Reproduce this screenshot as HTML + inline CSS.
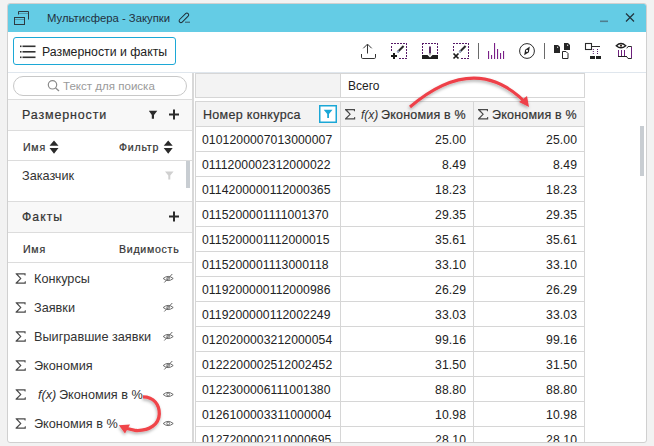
<!DOCTYPE html>
<html><head><meta charset="utf-8">
<style>
*{box-sizing:border-box;margin:0;padding:0}
html,body{width:654px;height:446px;overflow:hidden;background:#f2f2f2;font-family:"Liberation Sans",sans-serif;color:#333}
.a{position:absolute}
.t{position:absolute;white-space:nowrap;line-height:1}
#win{position:absolute;left:7px;top:3px;width:640px;height:440px;border:1px solid #d0d0d0;border-radius:3px;background:#fff;overflow:hidden}
#pg{position:absolute;left:-8px;top:-4px;width:654px;height:446px}
.hl{position:absolute;height:1px;background:#dcdcdc}
.cell{position:absolute;border:1px solid #d6d6d6}
.num{position:absolute;white-space:nowrap;line-height:1;font-size:12.2px;color:#222;letter-spacing:0.08px}
.fr{position:absolute;white-space:nowrap;line-height:1;font-size:12.7px;color:#333}
svg{position:absolute;left:0;top:0}
.sb{color:#333;-webkit-text-stroke:0.2px #333}
.sb2{color:#333;-webkit-text-stroke:0.2px #333}
</style></head><body>
<div id="win"><div id="pg">

<div class="a" style="left:0;top:0;width:654px;height:32px;background:#64cce5"></div>
<div class="t" style="left:47px;top:13px;font-size:11.3px;color:#23303d">Мультисфера - Закупки</div>
<div class="hl" style="left:0;top:72px;width:654px;background:#dfe6ed"></div>
<div class="a" style="left:13px;top:37px;width:163px;height:28px;border:1px solid #1ca8d6;border-radius:3px"></div>
<div class="t" style="left:42px;top:46px;font-size:12.3px;color:#222">Размерности и факты</div>
<div class="a" style="left:13px;top:76px;width:174px;height:20px;border:1px solid #c8c8c8;border-radius:10px"></div>
<div class="t" style="left:63px;top:81px;font-size:11.55px;color:#9a9a9a">Текст для поиска</div>
<div class="hl" style="left:0;top:99px;width:192px"></div>
<div class="a" style="left:0;top:100px;width:192px;height:30px;background:#f8f8f8"></div>
<div class="t sb" style="left:22px;top:109px;font-size:12.5px;letter-spacing:0.85px">Размерности</div>
<div class="hl" style="left:0;top:130px;width:192px"></div>
<div class="t sb2" style="left:23px;top:142px;font-size:10.6px;letter-spacing:0.75px">Имя</div>
<div class="t sb2" style="left:119px;top:142px;font-size:10.6px;letter-spacing:0.75px">Фильтр</div>
<div class="hl" style="left:0;top:160px;width:192px"></div>
<div class="fr" style="left:22px;top:170px">Заказчик</div>
<div class="a" style="left:186px;top:161px;width:4px;height:27px;background:#c8cdd2"></div>
<div class="hl" style="left:0;top:201px;width:192px"></div>
<div class="a" style="left:0;top:202px;width:192px;height:30px;background:#f8f8f8"></div>
<div class="t sb" style="left:22px;top:211px;font-size:12.2px;letter-spacing:1.05px">Факты</div>
<div class="hl" style="left:0;top:232px;width:192px"></div>
<div class="t sb2" style="left:23px;top:244px;font-size:10.6px;letter-spacing:0.75px">Имя</div>
<div class="t sb2" style="left:119px;top:244px;font-size:10.6px;letter-spacing:0.72px">Видимость</div>
<div class="hl" style="left:0;top:262px;width:192px"></div>
<div class="fr" style="left:34px;top:273px">Конкурсы</div>
<div class="fr" style="left:34px;top:302px">Заявки</div>
<div class="fr" style="left:34px;top:331px">Выигравшие заявки</div>
<div class="fr" style="left:34px;top:360px">Экономия</div>
<div class="fr" style="left:38px;top:389px"><i>f(x)</i></div>
<div class="fr" style="left:59px;top:389px">Экономия в %</div>
<div class="fr" style="left:34px;top:418px">Экономия в %</div>
<div class="a" style="left:192px;top:73px;width:2px;height:380px;background:#d8d8d8"></div>
<div class="cell" style="left:195px;top:73px;width:146px;height:25px;background:#f3f3f3"></div>
<div class="cell" style="left:340px;top:73px;width:245px;height:25px;background:#fff"></div>
<div class="t" style="left:348px;top:80px;font-size:12px;color:#222">Всего</div>
<div class="cell" style="left:195px;top:101px;width:146px;height:26px;background:#f3f3f3"></div>
<div class="cell" style="left:340px;top:101px;width:134px;height:26px;background:#f3f3f3"></div>
<div class="cell" style="left:473px;top:101px;width:112px;height:26px;background:#f3f3f3"></div>
<div class="t sb" style="left:203px;top:109px;font-size:12.5px;letter-spacing:0.32px">Номер конкурса</div>
<div class="t" style="left:361px;top:109px;font-size:12px;font-style:italic;color:#333">f(x)</div>
<div class="t sb" style="left:381px;top:109px;font-size:12.5px;letter-spacing:0.2px">Экономия в %</div>
<div class="t sb" style="left:492px;top:109px;font-size:12.5px;letter-spacing:0.2px">Экономия в %</div>
<div class="cell" style="left:195px;top:126px;width:146px;height:26px"></div>
<div class="cell" style="left:340px;top:126px;width:134px;height:26px"></div>
<div class="cell" style="left:473px;top:126px;width:112px;height:26px"></div>
<div class="num" style="left:202px;top:134px">0101200007013000007</div>
<div class="num" style="right:188px;top:134px">25.00</div>
<div class="num" style="right:77px;top:134px">25.00</div>
<div class="cell" style="left:195px;top:151px;width:146px;height:26px"></div>
<div class="cell" style="left:340px;top:151px;width:134px;height:26px"></div>
<div class="cell" style="left:473px;top:151px;width:112px;height:26px"></div>
<div class="num" style="left:202px;top:159px">0111200002312000022</div>
<div class="num" style="right:188px;top:159px">8.49</div>
<div class="num" style="right:77px;top:159px">8.49</div>
<div class="cell" style="left:195px;top:176px;width:146px;height:26px"></div>
<div class="cell" style="left:340px;top:176px;width:134px;height:26px"></div>
<div class="cell" style="left:473px;top:176px;width:112px;height:26px"></div>
<div class="num" style="left:202px;top:184px">0114200000112000365</div>
<div class="num" style="right:188px;top:184px">18.23</div>
<div class="num" style="right:77px;top:184px">18.23</div>
<div class="cell" style="left:195px;top:201px;width:146px;height:26px"></div>
<div class="cell" style="left:340px;top:201px;width:134px;height:26px"></div>
<div class="cell" style="left:473px;top:201px;width:112px;height:26px"></div>
<div class="num" style="left:202px;top:209px">0115200001111001370</div>
<div class="num" style="right:188px;top:209px">29.35</div>
<div class="num" style="right:77px;top:209px">29.35</div>
<div class="cell" style="left:195px;top:226px;width:146px;height:26px"></div>
<div class="cell" style="left:340px;top:226px;width:134px;height:26px"></div>
<div class="cell" style="left:473px;top:226px;width:112px;height:26px"></div>
<div class="num" style="left:202px;top:234px">0115200001112000015</div>
<div class="num" style="right:188px;top:234px">35.61</div>
<div class="num" style="right:77px;top:234px">35.61</div>
<div class="cell" style="left:195px;top:251px;width:146px;height:26px"></div>
<div class="cell" style="left:340px;top:251px;width:134px;height:26px"></div>
<div class="cell" style="left:473px;top:251px;width:112px;height:26px"></div>
<div class="num" style="left:202px;top:259px">0115200001113000118</div>
<div class="num" style="right:188px;top:259px">33.10</div>
<div class="num" style="right:77px;top:259px">33.10</div>
<div class="cell" style="left:195px;top:276px;width:146px;height:26px"></div>
<div class="cell" style="left:340px;top:276px;width:134px;height:26px"></div>
<div class="cell" style="left:473px;top:276px;width:112px;height:26px"></div>
<div class="num" style="left:202px;top:284px">0119200000112000986</div>
<div class="num" style="right:188px;top:284px">26.29</div>
<div class="num" style="right:77px;top:284px">26.29</div>
<div class="cell" style="left:195px;top:301px;width:146px;height:26px"></div>
<div class="cell" style="left:340px;top:301px;width:134px;height:26px"></div>
<div class="cell" style="left:473px;top:301px;width:112px;height:26px"></div>
<div class="num" style="left:202px;top:309px">0119200000112002249</div>
<div class="num" style="right:188px;top:309px">33.03</div>
<div class="num" style="right:77px;top:309px">33.03</div>
<div class="cell" style="left:195px;top:326px;width:146px;height:26px"></div>
<div class="cell" style="left:340px;top:326px;width:134px;height:26px"></div>
<div class="cell" style="left:473px;top:326px;width:112px;height:26px"></div>
<div class="num" style="left:202px;top:334px">0120200003212000054</div>
<div class="num" style="right:188px;top:334px">99.16</div>
<div class="num" style="right:77px;top:334px">99.16</div>
<div class="cell" style="left:195px;top:351px;width:146px;height:26px"></div>
<div class="cell" style="left:340px;top:351px;width:134px;height:26px"></div>
<div class="cell" style="left:473px;top:351px;width:112px;height:26px"></div>
<div class="num" style="left:202px;top:359px">0122200002512002452</div>
<div class="num" style="right:188px;top:359px">31.50</div>
<div class="num" style="right:77px;top:359px">31.50</div>
<div class="cell" style="left:195px;top:376px;width:146px;height:26px"></div>
<div class="cell" style="left:340px;top:376px;width:134px;height:26px"></div>
<div class="cell" style="left:473px;top:376px;width:112px;height:26px"></div>
<div class="num" style="left:202px;top:384px">0122300006111001380</div>
<div class="num" style="right:188px;top:384px">88.80</div>
<div class="num" style="right:77px;top:384px">88.80</div>
<div class="cell" style="left:195px;top:401px;width:146px;height:26px"></div>
<div class="cell" style="left:340px;top:401px;width:134px;height:26px"></div>
<div class="cell" style="left:473px;top:401px;width:112px;height:26px"></div>
<div class="num" style="left:202px;top:409px">0126100003311000004</div>
<div class="num" style="right:188px;top:409px">10.98</div>
<div class="num" style="right:77px;top:409px">10.98</div>
<div class="cell" style="left:195px;top:426px;width:146px;height:26px"></div>
<div class="cell" style="left:340px;top:426px;width:134px;height:26px"></div>
<div class="cell" style="left:473px;top:426px;width:112px;height:26px"></div>
<div class="num" style="left:202px;top:434px">0127200002110000695</div>
<div class="num" style="right:188px;top:434px">28.10</div>
<div class="num" style="right:77px;top:434px">28.10</div>
<div class="a" style="left:640px;top:126px;width:4px;height:50px;background:#c8cdd2"></div>
<svg width="654" height="446" viewBox="0 0 654 446"><g fill="none" stroke="#2d3a42" stroke-width="1"><path d="M18.5 14.5V11.5H28.5V19.5"/><rect x="14.5" y="17.5" width="10" height="7"/></g><rect x="19" y="13" width="9" height="1" fill="#2d3a42" opacity=".35"/><rect x="15" y="19" width="9" height="1" fill="#2d3a42" opacity=".35"/><rect x="-6" y="-1.8" width="12" height="3.6" rx="1.8" transform="translate(183.9 17.8) rotate(-45)" stroke="#1f2d36" stroke-width="1" fill="none"/><rect x="185" y="21.6" width="5" height="1.3" fill="#3a5a68" opacity=".8"/><rect x="600" y="20.5" width="8" height="1.6" fill="#4a6a78" opacity=".8"/><path d="M626 13.5L634 21.5M634 13.5L626 21.5" stroke="#22333d" stroke-width="1.2" fill="none"/><g fill="#333"><rect x="20" y="45.5" width="1.5" height="1.6"/><rect x="22.5" y="45.5" width="13" height="1.6"/><rect x="20" y="51" width="1.5" height="1.6"/><rect x="22.5" y="51" width="13" height="1.6"/><rect x="20" y="56.5" width="1.5" height="1.6"/><rect x="22.5" y="56.5" width="13" height="1.6"/></g><circle cx="52.5" cy="84.8" r="4.2" stroke="#8a8a8a" stroke-width="1.2" fill="none"/><path d="M55.6 88L59 91" stroke="#8a8a8a" stroke-width="1.3" fill="none"/><path d="M148.8 110.8H157.3L154 115V118.7H151.8V115Z" fill="#2b2b2b"/><path d="M169 114.6H179M174 109.6V119.6" stroke="#2b2b2b" stroke-width="2" fill="none"/><path d="M169 216.5H179M174 211.5V221.5" stroke="#2b2b2b" stroke-width="2" fill="none"/><path d="M54 140.5L58.5 145.8H49.5Z M54 153.7L58.5 148H49.5Z" fill="#2b2b2b"/><path d="M168.2 140.5L172.7 145.8H163.7Z M168.2 153.7L172.7 148H163.7Z" fill="#2b2b2b"/><path d="M165 171.5H173.6L170.3 175.5V179.5H168.3V175.5Z" fill="#d0d0d0"/><path transform="translate(15.6 273.2)" d="M0 0H10V2.2H9.1L8.7 1.3H2.3L5.9 5.2L2.1 9.2H8.9L9.3 8.1H10.2V10.5H0V9.5L4.4 5.2L0 0.9Z" fill="#4a4a4a"/><path transform="translate(15.6 302.2)" d="M0 0H10V2.2H9.1L8.7 1.3H2.3L5.9 5.2L2.1 9.2H8.9L9.3 8.1H10.2V10.5H0V9.5L4.4 5.2L0 0.9Z" fill="#4a4a4a"/><path transform="translate(15.6 331.2)" d="M0 0H10V2.2H9.1L8.7 1.3H2.3L5.9 5.2L2.1 9.2H8.9L9.3 8.1H10.2V10.5H0V9.5L4.4 5.2L0 0.9Z" fill="#4a4a4a"/><path transform="translate(15.6 360.2)" d="M0 0H10V2.2H9.1L8.7 1.3H2.3L5.9 5.2L2.1 9.2H8.9L9.3 8.1H10.2V10.5H0V9.5L4.4 5.2L0 0.9Z" fill="#4a4a4a"/><path transform="translate(15.6 389.2)" d="M0 0H10V2.2H9.1L8.7 1.3H2.3L5.9 5.2L2.1 9.2H8.9L9.3 8.1H10.2V10.5H0V9.5L4.4 5.2L0 0.9Z" fill="#4a4a4a"/><path transform="translate(15.6 418.2)" d="M0 0H10V2.2H9.1L8.7 1.3H2.3L5.9 5.2L2.1 9.2H8.9L9.3 8.1H10.2V10.5H0V9.5L4.4 5.2L0 0.9Z" fill="#4a4a4a"/><path transform="translate(345 109)" d="M0 0H10V2.2H9.1L8.7 1.3H2.3L5.9 5.2L2.1 9.2H8.9L9.3 8.1H10.2V10.5H0V9.5L4.4 5.2L0 0.9Z" fill="#4a4a4a"/><path transform="translate(478 109)" d="M0 0H10V2.2H9.1L8.7 1.3H2.3L5.9 5.2L2.1 9.2H8.9L9.3 8.1H10.2V10.5H0V9.5L4.4 5.2L0 0.9Z" fill="#4a4a4a"/><path d="M163.2 278.5 Q168.2 274.3 173.2 278.5 Q168.2 282.7 163.2 278.5Z" stroke="#6a6a6a" stroke-width="1" fill="none"/><circle cx="168.2" cy="278.5" r="1.4" stroke="#6a6a6a" stroke-width="0.9" fill="#fff"/><path d="M164.3 282.5L172.3 274.0" stroke="#6a6a6a" stroke-width="1" fill="none"/><path d="M163.2 307.5 Q168.2 303.3 173.2 307.5 Q168.2 311.7 163.2 307.5Z" stroke="#6a6a6a" stroke-width="1" fill="none"/><circle cx="168.2" cy="307.5" r="1.4" stroke="#6a6a6a" stroke-width="0.9" fill="#fff"/><path d="M164.3 311.5L172.3 303.0" stroke="#6a6a6a" stroke-width="1" fill="none"/><path d="M163.2 336.5 Q168.2 332.3 173.2 336.5 Q168.2 340.7 163.2 336.5Z" stroke="#6a6a6a" stroke-width="1" fill="none"/><circle cx="168.2" cy="336.5" r="1.4" stroke="#6a6a6a" stroke-width="0.9" fill="#fff"/><path d="M164.3 340.5L172.3 332.0" stroke="#6a6a6a" stroke-width="1" fill="none"/><path d="M163.2 365.5 Q168.2 361.3 173.2 365.5 Q168.2 369.7 163.2 365.5Z" stroke="#6a6a6a" stroke-width="1" fill="none"/><circle cx="168.2" cy="365.5" r="1.4" stroke="#6a6a6a" stroke-width="0.9" fill="#fff"/><path d="M164.3 369.5L172.3 361.0" stroke="#6a6a6a" stroke-width="1" fill="none"/><path d="M163.2 394.5 Q168.2 390.3 173.2 394.5 Q168.2 398.7 163.2 394.5Z" stroke="#6a6a6a" stroke-width="1" fill="none"/><circle cx="168.2" cy="394.5" r="1.4" stroke="#6a6a6a" stroke-width="0.9" fill="#fff"/><path d="M163.2 423.5 Q168.2 419.3 173.2 423.5 Q168.2 427.7 163.2 423.5Z" stroke="#6a6a6a" stroke-width="1" fill="none"/><circle cx="168.2" cy="423.5" r="1.4" stroke="#6a6a6a" stroke-width="0.9" fill="#fff"/><rect x="319.75" y="105.75" width="16.5" height="16.5" stroke="#1ba7d6" stroke-width="1.5" fill="#fff"/><path d="M323.7 109.7H332.5L329 114V118H327.2V114Z" fill="#1ba7d6"/><g fill="none" stroke="#333" stroke-width="1.1"><path d="M367.5 44.5V53.5M363.3 48.3L367.5 44.1L371.7 48.3" stroke-width="1"/><path d="M361.5 54V57.3Q361.5 58.5 362.7 58.5H374.3Q375.5 58.5 375.5 57.3V54" stroke-width="1"/></g><rect x="391" y="43" width="2" height="1" fill="#571a68"/><rect x="394" y="43" width="2" height="1" fill="#571a68"/><rect x="397" y="43" width="2" height="1" fill="#571a68"/><rect x="400" y="43" width="2" height="1" fill="#571a68"/><rect x="403" y="43" width="2" height="1" fill="#571a68"/><rect x="406" y="43" width="1" height="1" fill="#571a68"/><rect x="406" y="43" width="1" height="2" fill="#571a68"/><rect x="406" y="46" width="1" height="2" fill="#571a68"/><rect x="406" y="49" width="1" height="2" fill="#571a68"/><rect x="406" y="52" width="1" height="2" fill="#571a68"/><rect x="406" y="55" width="1" height="2" fill="#571a68"/><rect x="406" y="58" width="1" height="1" fill="#571a68"/><rect x="391" y="46" width="1" height="2" fill="#571a68"/><rect x="391" y="49" width="1" height="2" fill="#571a68"/><rect x="399" y="58" width="2" height="1" fill="#571a68"/><rect x="402" y="58" width="2" height="1" fill="#571a68"/><rect x="405" y="58" width="2" height="1" fill="#571a68"/><rect x="422" y="43" width="2" height="1" fill="#571a68"/><rect x="425" y="43" width="2" height="1" fill="#571a68"/><rect x="428" y="43" width="2" height="1" fill="#571a68"/><rect x="431" y="43" width="2" height="1" fill="#571a68"/><rect x="434" y="43" width="2" height="1" fill="#571a68"/><rect x="437" y="43" width="1" height="1" fill="#571a68"/><rect x="437" y="43" width="1" height="2" fill="#571a68"/><rect x="437" y="46" width="1" height="2" fill="#571a68"/><rect x="437" y="49" width="1" height="2" fill="#571a68"/><rect x="437" y="52" width="1" height="2" fill="#571a68"/><rect x="437" y="55" width="1" height="2" fill="#571a68"/><rect x="437" y="58" width="1" height="1" fill="#571a68"/><rect x="422" y="43" width="1" height="2" fill="#571a68"/><rect x="422" y="46" width="1" height="2" fill="#571a68"/><rect x="422" y="49" width="1" height="2" fill="#571a68"/><rect x="422" y="52" width="1" height="2" fill="#571a68"/><rect x="422" y="55" width="1" height="2" fill="#571a68"/><rect x="453" y="43" width="2" height="1" fill="#571a68"/><rect x="456" y="43" width="2" height="1" fill="#571a68"/><rect x="459" y="43" width="2" height="1" fill="#571a68"/><rect x="462" y="43" width="2" height="1" fill="#571a68"/><rect x="465" y="43" width="2" height="1" fill="#571a68"/><rect x="468" y="43" width="1" height="1" fill="#571a68"/><rect x="468" y="43" width="1" height="2" fill="#571a68"/><rect x="468" y="46" width="1" height="2" fill="#571a68"/><rect x="468" y="49" width="1" height="2" fill="#571a68"/><rect x="468" y="52" width="1" height="2" fill="#571a68"/><rect x="468" y="55" width="1" height="2" fill="#571a68"/><rect x="468" y="58" width="1" height="1" fill="#571a68"/><rect x="453" y="46" width="1" height="2" fill="#571a68"/><rect x="453" y="49" width="1" height="2" fill="#571a68"/><rect x="461" y="58" width="2" height="1" fill="#571a68"/><rect x="464" y="58" width="2" height="1" fill="#571a68"/><rect x="467" y="58" width="2" height="1" fill="#571a68"/><path d="M397.6 52L403.6 46" stroke="#2a2a2a" stroke-width="2" fill="none"/><path d="M397.2 52.4L398.8 50.8" stroke="#9aa8c8" stroke-width="2" fill="none"/><rect x="391" y="55" width="6" height="2" fill="#1a1a1a"/><rect x="393" y="53" width="2" height="6" fill="#1a1a1a"/><path d="M459.6 52L465.6 46" stroke="#2a2a2a" stroke-width="2" fill="none"/><path d="M459.2 52.4L460.8 50.8" stroke="#9aa8c8" stroke-width="2" fill="none"/><path d="M453.5 53.5L458.5 58.5M458.5 53.5L453.5 58.5" stroke="#1a1a1a" stroke-width="1.7" fill="none"/><path d="M430 46.5V53" stroke="#4a1858" stroke-width="1.8" fill="none"/><path d="M428.6 53L430 56L431.4 53Z" fill="#999"/><path d="M422 55H427.5L430 57.5L432.5 55H438V59H422Z" fill="#1e1e1e"/><rect x="478" y="43" width="1" height="16" fill="#6a6a6a"/><rect x="544" y="43" width="1" height="16" fill="#6a6a6a"/><rect x="488" y="51" width="1.1" height="8" fill="#7b2088"/><rect x="491" y="55" width="1.1" height="4" fill="#7b2088"/><rect x="494" y="43" width="1.1" height="16" fill="#7b2088"/><rect x="497" y="49" width="1.1" height="10" fill="#7b2088"/><rect x="500" y="53" width="1.1" height="6" fill="#7b2088"/><rect x="503" y="51" width="1.1" height="8" fill="#7b2088"/><circle cx="527" cy="51" r="7.4" stroke="#2a2a2a" stroke-width="1" fill="none"/><path d="M529.8 46.6L528.9 52.15L524.2 55.2L525.1 49.65Z" fill="#222"/><circle cx="527" cy="50.9" r="1.1" fill="#fff"/><path d="M554 45H558L560 47V53H554Z" fill="#262626"/><path d="M557 46.2L558.6 47.8H557Z" fill="#fff"/><path d="M564 43H568L570 45V50H564Z" fill="#262626"/><path d="M567 44.2L568.6 45.8H567Z" fill="#fff"/><path d="M562.5 51.5H566L568 53.5V58.5H562.5Z" stroke="#262626" stroke-width="1" fill="none"/><rect x="585.5" y="43.5" width="6" height="6" stroke="#2b2b2b" stroke-width="1.1" fill="none"/><path d="M592 46.5H600" stroke="#2b2b2b" stroke-width="1" fill="none"/><rect x="592.8" y="49.0" width="1" height="1" fill="#571a68"/><rect x="592.8" y="51.0" width="1" height="1" fill="#571a68"/><rect x="592.8" y="53.0" width="1" height="1" fill="#571a68"/><rect x="597.0" y="49.0" width="1" height="1" fill="#571a68"/><rect x="597.0" y="51.0" width="1" height="1" fill="#571a68"/><rect x="597.0" y="53.0" width="1" height="1" fill="#571a68"/><rect x="590" y="56" width="5" height="3" fill="#222"/><rect x="596" y="56" width="5" height="3" fill="#222"/><path d="M616.3 45.7Q621 41.4 625.7 45.7Q621 50 616.3 45.7Z" stroke="#1e1e1e" stroke-width="1.4" fill="#fff"/><circle cx="621" cy="45.7" r="1.1" fill="#3a2a20"/><path d="M618.5 50V56M621.5 50V56M624.5 50V56" stroke="#6d1f7c" stroke-width="1" fill="none"/><path d="M618 56.5H627" stroke="#222" stroke-width="1" fill="none"/><path d="M626.8 48.3L628 46.5H631.5V58.5H628L626.8 56.8" stroke="#2a2a2a" stroke-width="1" fill="none"/><path d="M631.5 47V58" stroke="#6d1f7c" stroke-width="1" fill="none"/><defs><filter id="sh" x="-20%" y="-20%" width="140%" height="140%"><feDropShadow dx="-0.5" dy="1.8" stdDeviation="1.4" flood-color="#000" flood-opacity="0.3"/></filter></defs><g filter="url(#sh)"><path d="M410 107 Q474 52.5 524 101" stroke="#ee4148" stroke-width="3" fill="none"/><path d="M529 107L519 102L527 96Z" fill="#ee4148"/><path d="M143 396.8 C154 396.8 159.5 405 159.3 414 C159 424 150 431 136 430.5 L127 428.5" stroke="#f0444a" stroke-width="3.3" fill="none"/><path d="M118.8 425.2L130 424.6L125 433.6Z" fill="#f0444a"/></g></svg>
</div></div></body></html>
